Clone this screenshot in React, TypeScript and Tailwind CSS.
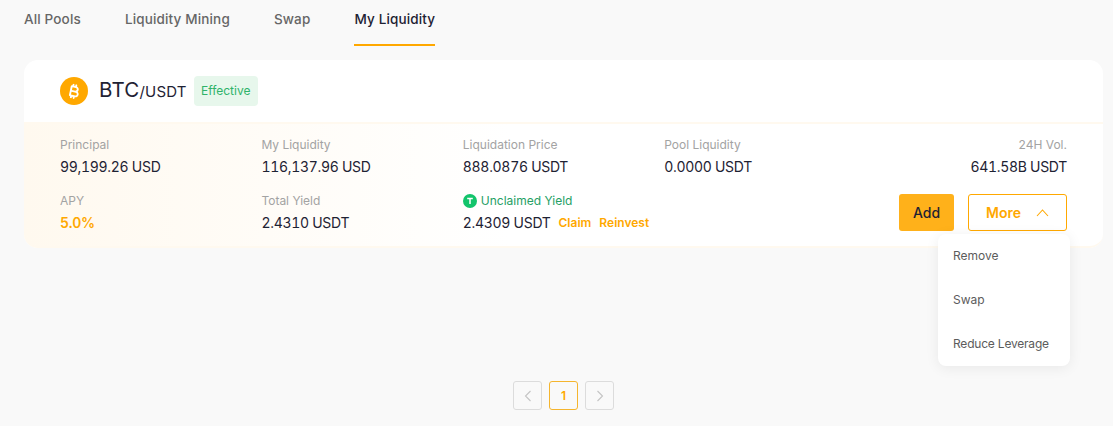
import { FaBitcoinSign } from "react-icons/fa6";

function Stat({ label, value, right, orange }: { label: string; value: string; right?: boolean; orange?: boolean }) {
  return (
    <div className={right ? "text-right" : ""}>
      <div className="text-[12px] leading-[18px] text-[#a3a3a3]">{label}</div>
      <div className={`mt-[3px] text-[14px] leading-[20px] tracking-[-0.3px] tabular-nums ${orange ? "font-semibold text-[#ffa800]" : "text-[#1e2233]"}`}>
        {value}
      </div>
    </div>
  );
}

function Chevron({ dir }: { dir: "left" | "right" }) {
  return (
    <svg width="10" height="12" viewBox="0 0 10 12" fill="none" stroke="#c4c4c4" strokeWidth="1.1">
      <path d={dir === "left" ? "M7.5 1 L2.5 6 L7.5 11" : "M2.5 1 L7.5 6 L2.5 11"} />
    </svg>
  );
}

export default function App() {
  return (
    <div className="h-[426px] overflow-hidden bg-[#f9f9f9] font-['Inter','Noto_Sans',sans-serif]">
      <div className="flex h-[46px] gap-[44px] pl-[24px] text-[13.5px] font-medium tracking-[0.15px]">
        <div className="pt-[9px] leading-[20px] text-[#666666]">All Pools</div>
        <div className="pt-[9px] leading-[20px] text-[#666666]">Liquidity Mining</div>
        <div className="pt-[9px] leading-[20px] text-[#666666]">Swap</div>
        <div className="border-b-2 border-[#ffa800] pt-[9px] leading-[20px] text-[#1e2233]">My Liquidity</div>
      </div>

      <div className="mt-[14px] ml-[24px] mr-[10px]">
        <div className="rounded-[14px] bg-white">
          <div className="flex h-[62px] items-center pl-[36px]">
            <div className="flex h-[28px] w-[28px] items-center justify-center rounded-full bg-[#ffa800] text-white">
              <FaBitcoinSign className="h-[15px] w-[15px] rotate-12" />
            </div>
            <div className="ml-[11px] flex items-baseline text-[#1e2233]">
              <span className="text-[20.5px] leading-[28px] tracking-[0.2px]">BTC</span>
              <span className="text-[15px] leading-[28px] tracking-[0.2px]">/USDT</span>
            </div>
            <div className="ml-[7px] flex h-[30px] w-[64px] items-center justify-center rounded-[4px] bg-[#e7f7ec] text-[12px] text-[#2fb36a]">
              Effective
            </div>
          </div>

          <div className="grid h-[126px] grid-cols-5 content-start gap-y-[15px] rounded-b-[14px] border-y-2 border-y-[#fff9ef] bg-gradient-to-r from-[#fff9ef] to-white to-[45%] pt-[12px] pr-[36px] pl-[36px]">
            <Stat label="Principal" value="99,199.26 USD" />
            <Stat label="My Liquidity" value="116,137.96 USD" />
            <Stat label="Liquidation Price" value="888.0876 USDT" />
            <Stat label="Pool Liquidity" value="0.0000 USDT" />
            <Stat label="24H Vol." value="641.58B USDT" right />

            <Stat label="APY" value="5.0%" orange />
            <Stat label="Total Yield" value="2.4310 USDT" />
            <div>
              <div className="flex items-center text-[12px] leading-[18px] text-[#25a065]">
                <span className="mr-[4px] flex h-[14px] w-[14px] items-center justify-center rounded-full bg-[#12c46b]">
                  <svg width="8" height="8" viewBox="0 0 8 8" fill="none" stroke="white" strokeWidth="1.5">
                    <path d="M1.2 1.5 H6.8 M4 1.5 V7" />
                  </svg>
                </span>
                Unclaimed Yield
              </div>
              <div className="mt-[3px] flex whitespace-nowrap text-[14px] leading-[20px] tracking-[-0.3px] tabular-nums text-[#1e2233]">
                2.4309 USDT
                <span className="ml-[8px] text-[12px] font-semibold tracking-normal text-[#ffa800]">Claim</span>
                <span className="ml-[8px] text-[12px] font-semibold tracking-normal text-[#ffa800]">Reinvest</span>
              </div>
            </div>
            <div className="col-span-2 flex items-start justify-end gap-[14px] pt-[2px]">
              <button className="h-[37px] w-[55px] rounded-[3px] bg-[#ffb11a] text-[14px] font-medium text-[#1e2233]">Add</button>
              <div className="relative">
                <button className="flex h-[37px] w-[99px] items-center justify-center gap-[15px] rounded-[3px] border border-[#ffa800] bg-white text-[14px] font-semibold text-[#ffa800]">
                  More
                  <svg width="13" height="9" viewBox="0 0 13 9" fill="none" stroke="#ffa800" strokeWidth="1.1">
                    <path d="M1 8 L6.5 2 L12 8" />
                  </svg>
                </button>
                <div className="absolute top-[40px] right-[-3px] z-10 w-[132px] rounded-[8px] bg-white shadow-[0_2px_14px_rgba(0,0,0,0.07)]">
                  <div className="flex h-[44px] items-center pl-[15px] text-[12px] text-[#5c5c5c]">Remove</div>
                  <div className="flex h-[44px] items-center pl-[15px] text-[12px] text-[#5c5c5c]">Swap</div>
                  <div className="flex h-[44px] items-center pl-[15px] text-[12px] tracking-[-0.2px] whitespace-nowrap text-[#5c5c5c]">Reduce Leverage</div>
                </div>
              </div>
            </div>
          </div>
        </div>

        <div className="mt-[133px] flex justify-center gap-[7px]">
          <div className="flex h-[29px] w-[29px] items-center justify-center rounded-[3px] border border-[#dcdcdc]"><Chevron dir="left" /></div>
          <div className="flex h-[29px] w-[29px] items-center justify-center rounded-[3px] border border-[#f5b52e] text-[12px] font-semibold text-[#ffa800]">1</div>
          <div className="flex h-[29px] w-[29px] items-center justify-center rounded-[3px] border border-[#dcdcdc]"><Chevron dir="right" /></div>
        </div>
      </div>
    </div>
  );
}
